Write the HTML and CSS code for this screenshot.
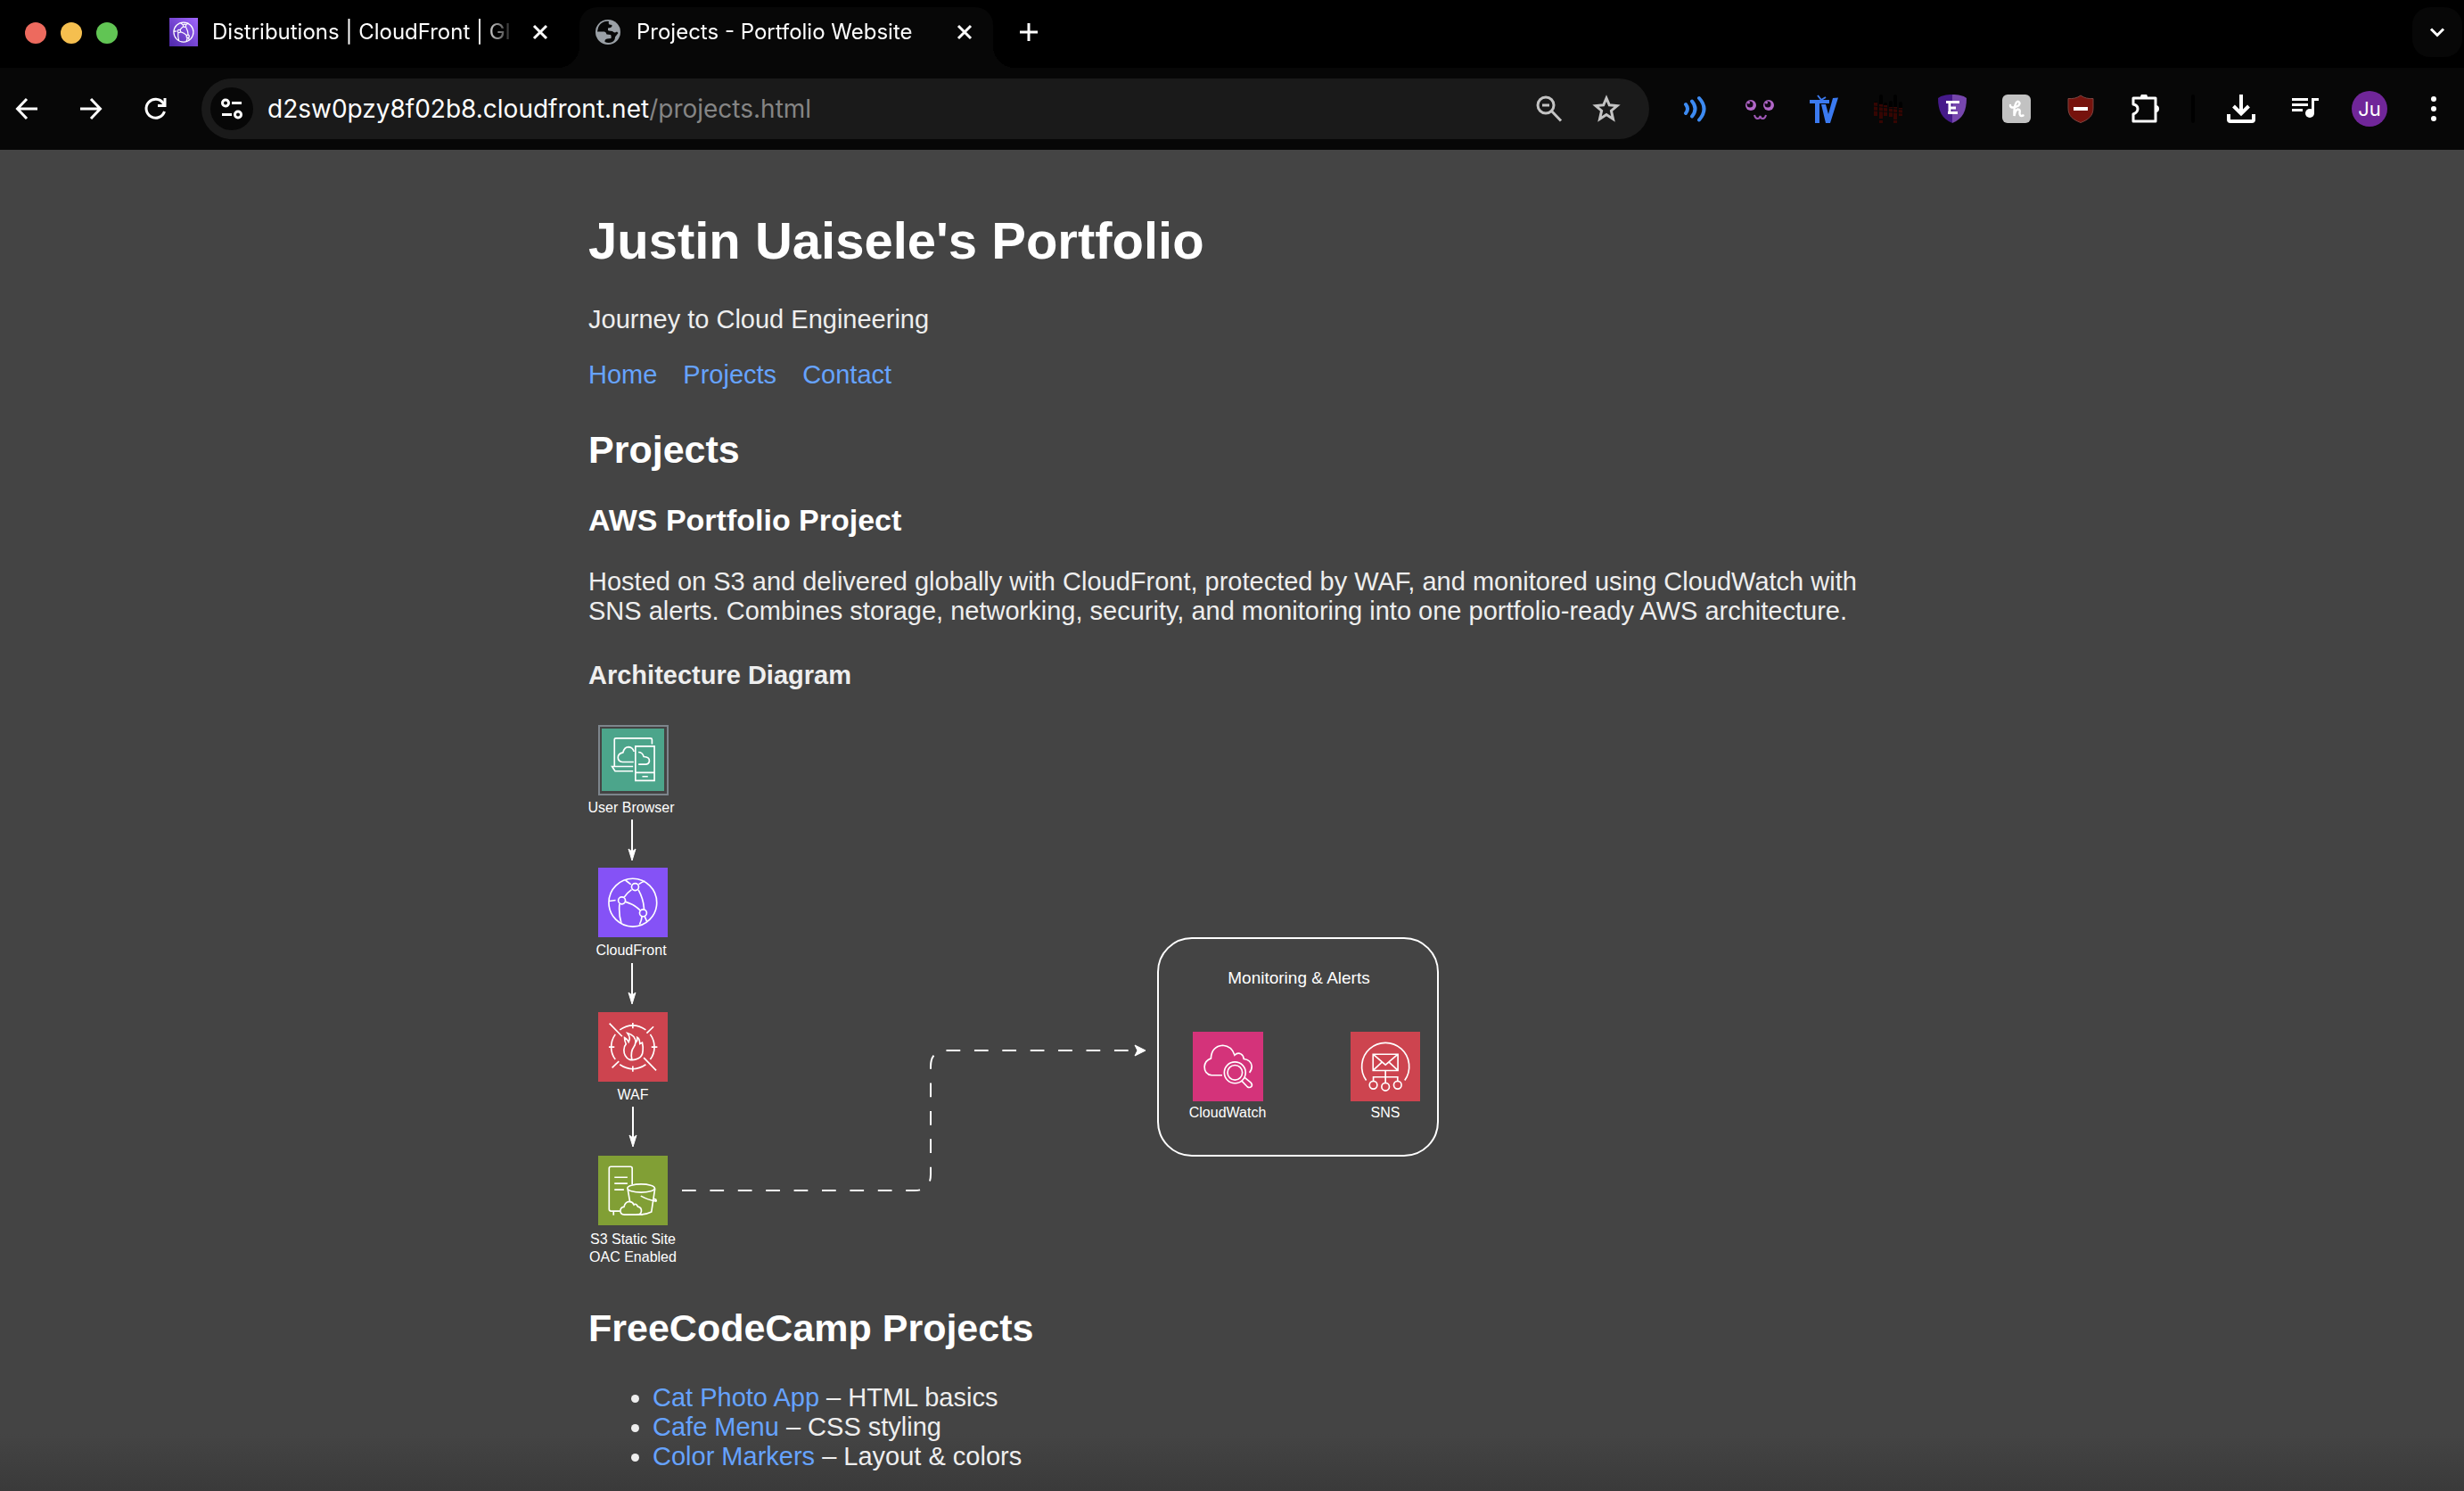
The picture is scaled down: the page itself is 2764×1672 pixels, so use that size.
FILE: index.html
```html
<!DOCTYPE html>
<html lang="en">
<head>
<meta charset="utf-8">
<meta name="viewport" content="width=device-width, initial-scale=1">
<title>Projects - Portfolio Website</title>
<link rel="stylesheet" href="styles.css">
</head>
<body>
<header class="browser">
  <div class="tabstrip">
    <div class="lights">
      <button class="light light-close" aria-label="Close window"></button>
      <button class="light light-min" aria-label="Minimize window"></button>
      <button class="light light-max" aria-label="Zoom window"></button>
    </div>
    <div class="tabs">
      <div class="tab">
        <svg class="favicon" viewBox="0 0 235 235" aria-hidden="true">
          <defs>
            <linearGradient id="violet" x1="0" y1="1" x2="1" y2="0"><stop offset="0" stop-color="#4d27a8"/><stop offset="1" stop-color="#a166ff"/></linearGradient>
            <symbol id="cloudfront" viewBox="0 0 235 235">
              <g fill="none" stroke="#fff">
                <circle cx="117" cy="118" r="81"/>
                <circle cx="125" cy="65" r="12"/><circle cx="80" cy="111" r="12"/><circle cx="152" cy="153" r="12"/>
                <path d="M88 100Q97 85 113 74M136 75Q154 108 155 141M91 115Q122 124 142 144M72 123Q69 158 78 187M37 113L59 110M92 42Q98 46 111 57M158 45Q148 48 137 56M148 164Q147 178 140 192M157 164L165 183"/>
              </g>
            </symbol>
          </defs>
          <rect width="235" height="235" fill="url(#violet)"/>
          <use href="#cloudfront" class="bold-glyph"/>
        </svg>
        <span class="tab-title">Distributions | CloudFront | Gl</span>
        <button class="tab-close" aria-label="Close tab"><svg viewBox="0 0 24 24"><path d="M5 5L19 19M19 5L5 19"/></svg></button>
      </div>
      <div class="tab tab-active">
        <svg class="favicon" viewBox="0 0 32 32" aria-hidden="true">
          <circle cx="16" cy="16" r="14" fill="#9aa0a6"/>
          <path fill="#070707" d="M17 4C12 3 7 6 5 11L4 15.500L12 15.500Q14 16 14.500 18.500L19 19Q20 20 19.500 23L15 23.500Q12 24 12.500 27Q17 29 21 27Q24 25 24 21.500L27.500 17L26 15.500Q23 17.500 21 15L17 14.500Q15.500 14 16 11.500L19 11Q21 10 20.500 8L17.500 7.500Q16 6 17 4Z"/>
        </svg>
        <span class="tab-title">Projects - Portfolio Website</span>
        <button class="tab-close" aria-label="Close tab"><svg viewBox="0 0 24 24"><path d="M5 5L19 19M19 5L5 19"/></svg></button>
      </div>
    </div>
    <button class="tool" aria-label="New tab"><svg class="line" viewBox="0 0 32 32"><path d="M16 6V26M6 16H26"/></svg></button>
    <button class="tab-search" aria-label="Search tabs"><svg class="line" viewBox="0 0 32 32"><path d="M9 12.500L16 19.500L23 12.500"/></svg></button>
  </div>

  <div class="toolbar">
    <button class="tool" aria-label="Back"><svg class="line" viewBox="0 0 32 32"><path d="M28 16H6M16 5L5.500 16L16 27"/></svg></button>
    <button class="tool" aria-label="Forward"><svg class="line" viewBox="0 0 32 32"><path d="M4 16H26M16 5L26.500 16L16 27"/></svg></button>
    <button class="tool" aria-label="Reload"><svg class="line" viewBox="0 0 32 32"><path d="M26.500 19A10.500 10.500 0 1 1 25 9.500L27 12"/><path d="M27 4V12.500H19"/></svg></button>
    <div class="omnibox">
      <button class="site-info" aria-label="View site information"><svg class="line" viewBox="0 0 32 32"><circle cx="9" cy="9.500" r="3.500"/><path d="M16 9.500H27M5 22.500H16"/><circle cx="23" cy="22.500" r="3.500"/></svg></button>
      <div class="url" role="textbox" contenteditable="true" spellcheck="false" aria-label="Address">d2sw0pzy8f02b8.cloudfront.net<span class="url-path">/projects.html</span></div>
      <div class="omnibox-actions">
        <button class="tool dim" aria-label="Zoom"><svg class="line" viewBox="0 0 32 32"><circle cx="12" cy="12" r="9"/><path d="M18 18L29 29.500M8 12H16"/></svg></button>
        <button class="tool dim" aria-label="Bookmark this tab"><svg class="line" viewBox="0 0 32 32"><path d="M16 4L19.300 11.800L28 12.600L21.400 18.200L23.500 27.500L16 22.600L8.500 27.500L10.600 18.200L4 12.600L12.700 11.800Z"/></svg></button>
      </div>
    </div>
    <button class="tool" aria-label="Volume extension"><svg viewBox="0 0 32 32"><path fill="none" stroke="#3d8bf2" stroke-width="4" stroke-linecap="round" d="M5 11Q9 16 5 21M12 7.500Q19 16 12 24.500M20 4Q31 16 20 28.500"/></svg></button>
    <button class="tool" aria-label="Face extension"><svg viewBox="0 0 32 32"><circle cx="6" cy="12" r="6" fill="#b267c8"/><circle cx="26" cy="12" r="6" fill="#b267c8"/><circle cx="5" cy="11" r="3.500" fill="#120616"/><circle cx="25" cy="11" r="3.500" fill="#120616"/><circle cx="3.500" cy="9" r="1.500" fill="#b267c8"/><circle cx="23.500" cy="9" r="1.500" fill="#b267c8"/><path fill="none" stroke="#a058b8" stroke-width="2" d="M10 23Q11 27 13.500 27T16.500 24Q17 27 19.500 27T23 23"/></svg></button>
    <button class="tool" aria-label="TV extension"><svg viewBox="0 0 32 32"><g fill="#3b7af0"><path d="M0 6H22V10H11V32H6V10H0Z"/><path d="M13 11H18L21 22L26 4L32 3.500L23 32H18Z"/></g><path fill="none" stroke="#3b7af0" stroke-width="2" d="M13 6L9 1M13 6L18 3"/></svg></button>
    <button class="tool" aria-label="Equalizer extension"><svg viewBox="0 0 32 32"><g stroke-width="4" stroke-linecap="round"><path stroke="#000" d="M2 10V13M8 2V13M13 11V14M19 9V14M24 2V14M30 10V15"/><path stroke="#350502" stroke-linecap="butt" d="M2 9V24M8 11V27M8 29V32M13 12V24M19 14V25M24 14V28M24 29V32M30 15V24"/></g><path stroke="#070707" d="M0 13L32 17M0 18L32 21"/></svg></button>
    <button class="tool" aria-label="Shield extension"><svg viewBox="0 0 32 32"><path fill="#451a8a" d="M16 0C9 0 4 1 0 4C0 18 4 27 16 32Z"/><path fill="#7646ad" d="M16 0C23 0 28 1 32 4C32 18 28 27 16 32Z"/><path fill="none" stroke="#fff" stroke-width="3" d="M9 8.500H24M13 8V21M12 15H20M11 20.500H22"/></svg></button>
    <button class="tool" aria-label="Honey extension"><svg viewBox="0 0 32 32"><rect width="32" height="32" rx="6" fill="#c2c2c2"/><path fill="none" stroke="#fff" stroke-width="2.500" stroke-linecap="round" d="M9 12Q9 15 13 14.500Q20 13 19.500 9.500Q18 6 15.500 9.500Q13 14 13.500 24Q14.500 17.500 17.500 16.500Q20.500 16.500 19.500 21Q19.500 25 23.500 23.500"/></svg></button>
    <button class="tool" aria-label="Blocker extension"><svg viewBox="0 0 32 32"><path fill="#76130d" stroke="#7d4541" d="M16 1C12 4 7 5 2 4.500V15C2 24 7 28 16 31.500C25 28 30 24 30 15V4.500C25 5 20 4 16 1Z"/><path fill="#fff" d="M8 14H24V18H8Z"/></svg></button>
    <button class="tool" aria-label="Extensions"><svg viewBox="0 0 32 32"><path fill="none" stroke="#fff" stroke-width="3" stroke-linejoin="round" d="M3 4H28V30H3V22Q8 20 8 16T3 11Z"/><path fill="#fff" d="M11 3A4 4 0 0 1 19 3ZM28 12A4 4 0 0 1 28 20Z"/></svg></button>
    <span class="divider"></span>
    <button class="tool" aria-label="Downloads"><svg viewBox="0 0 32 32"><path fill="none" stroke="#fff" stroke-width="4" d="M16 0V21M7.500 13L16 21.500L24.500 13M2 22V28Q2 30 4 30H28Q30 30 30 28V22"/></svg></button>
    <button class="tool" aria-label="Media controls"><svg viewBox="0 0 32 32"><path fill="none" stroke="#fff" stroke-width="3" d="M1 5.500H19M1 11.500H19M1 17.500H13M24.500 21V5.500H31"/><circle cx="21" cy="21" r="5" fill="#fff"/></svg></button>
    <button class="tool avatar" aria-label="Profile">Ju</button>
    <button class="tool" aria-label="Menu"><svg viewBox="0 0 32 32" fill="#fff"><circle cx="16" cy="5" r="3"/><circle cx="16" cy="16" r="3"/><circle cx="16" cy="27" r="3"/></svg></button>
  </div>
</header>

<div class="page">
  <div class="content">
    <h1>Justin Uaisele's Portfolio</h1>
    <p class="tagline">Journey to Cloud Engineering</p>
    <nav class="nav">
      <a href="#home">Home</a>
      <a href="#projects">Projects</a>
      <a href="#contact">Contact</a>
    </nav>
    <main>
      <h2 id="projects">Projects</h2>
      <h3>AWS Portfolio Project</h3>
      <p>Hosted on S3 and delivered globally with CloudFront, protected by WAF, and monitored using CloudWatch with SNS alerts. Combines storage, networking, security, and monitoring into one portfolio-ready AWS architecture.</p>
      <h4>Architecture Diagram</h4>
      <svg class="diagram" width="960" height="610" viewBox="0 0 960 610" role="img" aria-label="AWS architecture diagram">
        <rect x="12" y="2" width="77" height="77" fill="none" stroke="#7d858c" stroke-width="2"/>
        <rect x="15" y="5" width="70" height="70" fill="#4ca58b"/>
        <svg x="11" y="1" width="78" height="78" viewBox="0 0 235 235">
          <g class="glyph">
            <path d="M182 65V50Q182 45 177 45H60Q55 45 55 50V140M118 140H47L57 156H118"/>
            <path d="M120 125H82Q67 123 67 110Q67 96 84 93Q88 74 103 74Q117 75 121 90M136 92Q150 92 154 107Q174 108 173 122Q171 133 160 133H136"/>
            <path d="M126 72H190V188H126ZM126 161H190M149 174H168"/>
          </g>
        </svg>
        <rect x="11" y="161" width="78" height="78" fill="#8552f6"/>
        <use href="#cloudfront" class="glyph" x="11" y="161" width="78" height="78"/>
        <rect x="11" y="323" width="78" height="78" fill="#cd444f"/>
        <svg x="11" y="323" width="78" height="78" viewBox="0 0 235 235">
          <g class="glyph">
            <path d="M73 60Q95 45 117 45T161 60M73 177Q95 192 117 192T161 177M58 75Q44 95 44 118T58 160M176 75Q190 95 190 118T176 160"/>
            <path d="M117 36V55M117 182V201M36 118H55M180 118H200M187 49L164 71M70 166L47 188M38 38L81 82M154 154L196 197"/>
            <path d="M105 160Q87 150 87 128Q87 115 94 108Q89 96 89 86Q100 92 103 101Q111 88 99 71Q126 78 127 103Q134 95 132 85Q140 88 141 107L149 103Q153 120 151 130Q150 150 135 157Q120 164 105 160ZM114 160Q108 135 121 117Q126 110 126 102"/>
          </g>
        </svg>
        <rect x="11" y="484" width="78" height="78" fill="#819f35"/>
        <svg x="11" y="484" width="78" height="78" viewBox="0 0 235 235">
          <g class="glyph">
            <path d="M115 97V43Q115 37 109 37H43Q37 37 37 43V181Q37 187 43 187H74M52 187V201M55 73H99M55 94H99M55 115H87"/>
            <ellipse cx="145" cy="110" rx="46" ry="14"/>
            <path d="M100 113L107 154M192 110L180 190Q165 198 144 199M144 136Q170 150 192 153Q199 156 195 148L185 144"/>
            <path d="M88 199Q75 198 75 186Q76 174 87 173Q92 155 106 155Q117 156 121 166Q128 159 134 172Q147 175 146 187Q145 199 132 199Z"/>
            <path d="M130 199H150"/>
          </g>
        </svg>
        <path class="shaft" d="M49 107V144M49 268V305M50 429V466"/>
        <path class="shaft dashed" d="M105 523H366Q384 523 384 505V384Q384 366 402 366H616"/>
        <path class="head" d="M49 153L45 140L49 143L53 140ZM49 314L45 301L49 304L53 301ZM50 474L46 461L50 464L54 461ZM625 366L613 360L616 366L613 372Z"/>
        <rect x="639" y="240" width="314" height="244" rx="38" fill="none" stroke="#fff" stroke-width="2"/>
        <rect x="678" y="345" width="79" height="78" fill="#d4337a"/>
        <svg x="678" y="345" width="79" height="78" viewBox="0 0 235 235">
          <g class="glyph">
            <path d="M98 147H62Q38 143 38 118Q39 98 60 90Q62 49 100 46Q130 48 140 79Q150 69 161 75Q170 80 171 92Q195 95 198 116Q198 130 190 138"/>
            <circle cx="141" cy="138" r="36"/><circle cx="141" cy="138" r="25"/>
            <path d="M164 166L183 186Q190 191 197 185Q201 179 195 172L174 155"/>
          </g>
        </svg>
        <rect x="855" y="345" width="78" height="78" fill="#cd444f"/>
        <svg x="855" y="345" width="78" height="78" viewBox="0 0 235 235">
          <g class="glyph">
            <path d="M53 164A80 80 0 1 1 183 164M76 76H160V131H76ZM76 76L118 112L160 76M76 131L106 103M160 131L130 103M118 131V172M77 167V153H159V167"/>
            <circle cx="77" cy="180" r="13"/><circle cx="118" cy="186" r="13"/><circle cx="159" cy="180" r="13"/>
          </g>
        </svg>
        <g class="labels">
          <text x="48" y="99">User Browser</text>
          <text x="48" y="259">CloudFront</text>
          <text x="50" y="421">WAF</text>
          <text x="50" y="583">S3 Static Site</text>
          <text x="50" y="603">OAC Enabled</text>
          <text x="797" y="291" class="group-label">Monitoring &amp; Alerts</text>
          <text x="717" y="441">CloudWatch</text>
          <text x="894" y="441">SNS</text>
        </g>
      </svg>
      <h2>FreeCodeCamp Projects</h2>
      <ul class="projects">
        <li><a href="#cat">Cat Photo App</a> – HTML basics</li>
        <li><a href="#cafe">Cafe Menu</a> – CSS styling</li>
        <li><a href="#markers">Color Markers</a> – Layout &amp; colors</li>
      </ul>
    </main>
  </div>
</div>
</body>
</html>
```
FILE: styles.css
```css
* { box-sizing: border-box; }

body {
  margin: 0;
  min-height: 100vh;
  display: flex;
  flex-direction: column;
  background: #444;
  color: #eee;
  font-family: "Liberation Sans", Arial, sans-serif;
  font-size: 29px;
  line-height: 33px;
}

button {
  border: 0;
  padding: 0;
  background: none;
  color: #fff;
  font: inherit;
}

/* Browser chrome */
.browser {
  background: #070707;
  color: #fff;
  font-family: Inter, sans-serif;
}

.tabstrip {
  display: flex;
  align-items: flex-start;
  padding: 8px 2px 0 28px;
  background: #000;
}

.lights {
  display: flex;
  gap: 16px;
  margin: 17px 42px 0 0;
}

.light { width: 24px; height: 24px; border-radius: 50%; }
.light-close { background: #ed6a5e; }
.light-min { background: #f5bf4f; }
.light-max { background: #61c554; }

.tabs {
  display: flex;
  flex: 0 1 940px;
  min-width: 0;
  gap: 12px;
  margin-right: 20px;
}

.tab {
  position: relative;
  display: flex;
  flex: 1;
  min-width: 0;
  height: 68px;
  align-items: center;
  padding: 0 20px 12px 16px;
  font-size: 24px;
  line-height: 32px;
}

.tab-active {
  background: #070707;
  border-radius: 20px 20px 0 0;
}

.tab-active::before,
.tab-active::after {
  content: "";
  position: absolute;
  bottom: 0;
  width: 24px;
  height: 24px;
}

.tab-active::before {
  right: 100%;
  background: radial-gradient(circle at 0 0, #000 24px, #070707 24px);
}

.tab-active::after {
  left: 100%;
  background: radial-gradient(circle at 100% 0, #000 24px, #070707 24px);
}

.favicon { width: 32px; height: 32px; flex: none; margin-right: 16px; }
.bold-glyph { stroke-width: 9; }

.tab-title {
  flex: 1;
  min-width: 0;
  margin-right: 16px;
  overflow: hidden;
  white-space: nowrap;
  -webkit-mask-image: linear-gradient(to left, transparent, #000 36px);
  mask-image: linear-gradient(to left, transparent, #000 36px);
}

.tab-close { display: flex; width: 24px; height: 24px; }
.tab-close svg { width: 24px; height: 24px; fill: none; stroke: #fff; stroke-width: 3; }

.tool {
  display: flex;
  flex: none;
  width: 40px;
  height: 40px;
  align-items: center;
  justify-content: center;
}

.tool svg,
.tab-search svg,
.site-info svg { width: 32px; height: 32px; }
.tabstrip .tool { margin-top: 8px; }
.line { fill: none; stroke: currentColor; stroke-width: 3; }
.dim { color: #c4c4c4; }

.tab-search {
  display: flex;
  width: 56px;
  height: 56px;
  margin-left: auto;
  align-items: center;
  justify-content: center;
  border-radius: 20px;
  background: #070707;
}

.toolbar {
  display: flex;
  height: 92px;
  align-items: center;
  gap: 32px;
  padding: 0 14px 0 10px;
}

.omnibox {
  display: flex;
  flex: 1;
  min-width: 0;
  height: 68px;
  align-items: center;
  gap: 16px;
  padding: 0 28px 0 10px;
  border-radius: 34px;
  background: #1a1a1a;
}

.site-info {
  display: flex;
  flex: none;
  width: 48px;
  height: 48px;
  align-items: center;
  justify-content: center;
  border-radius: 50%;
  background: #070707;
}

.url {
  flex: 1;
  min-width: 0;
  overflow: hidden;
  white-space: nowrap;
  font-size: 28px;
  line-height: 40px;
}

.url-path { color: #858585; }
.omnibox-actions { display: flex; gap: 24px; }
.divider { width: 4px; height: 32px; border-radius: 2px; background: #000; }

.avatar {
  border-radius: 50%;
  background: #702699;
  font-size: 22px;
}

/* Portfolio page */
.page {
  flex: 1;
  padding: 69px 40px 16px;
  background: linear-gradient(to top, #3a3a3a, #444 64px);
}

.content { max-width: 1444px; margin: 0 auto; }

h1, h2, h3 { color: #fff; }
h1 { margin: 0 0 39px; font-size: 58px; line-height: 66px; }
h2 { margin: 43px 0 35px; font-size: 43px; line-height: 49px; }
h3 { margin: 0 0 34px; font-size: 34px; line-height: 38px; }
h4 { margin: 39px 0 38px; font-size: 29px; line-height: 33px; }
p { margin: 0; }

a { color: #66a3ff; text-decoration: none; }

.nav { display: flex; gap: 29px; margin-top: 29px; }

.diagram { display: block; max-width: 100%; height: auto; }
.glyph { fill: none; stroke: #fff; stroke-width: 5; }
.labels { fill: #fff; font-size: 16px; text-anchor: middle; }
.group-label { font-size: 19px; }
.shaft { fill: none; stroke: #fff; stroke-width: 2; }
.dashed { stroke-dasharray: 15.7; }
.head { fill: #fff; stroke: #fff; }

.projects { margin: 37px 0 0; padding-left: 72px; }
```
